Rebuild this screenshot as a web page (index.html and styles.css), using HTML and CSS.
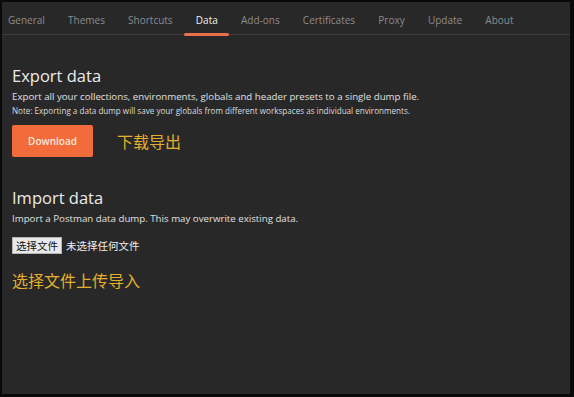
FILE: index.html
```html
<!DOCTYPE html>
<html>
<head>
<meta charset="utf-8">
<link rel="stylesheet" href="styles.css">
</head>
<body>
<div class="window">
  <nav class="tabs">
    <span class="tab first">General</span>
    <span class="tab">Themes</span>
    <span class="tab">Shortcuts</span>
    <span class="tab active">Data</span>
    <span class="tab">Add-ons</span>
    <span class="tab">Certificates</span>
    <span class="tab">Proxy</span>
    <span class="tab">Update</span>
    <span class="tab">About</span>
  </nav>
  <main class="content">
    <section class="section export">
      <h2 class="title">Export data</h2>
      <p class="desc">Export all your collections, environments, globals and header presets to a single dump file.</p>
      <p class="note">Note: Exporting a data dump will save your globals from different workspaces as individual environments.</p>
      <div class="action-row">
        <button class="btn-download">Download</button>
        <span class="annot">下载导出</span>
      </div>
    </section>
    <section class="section import">
      <h2 class="title">Import data</h2>
      <p class="desc">Import a Postman data dump. This may overwrite existing data.</p>
      <div class="file-row">
        <span class="file-btn">选择文件</span>
        <span class="file-label">未选择任何文件</span>
      </div>
      <div class="annot annot-import">选择文件上传导入</div>
    </section>
  </main>
</div>
</body>
</html>
```

FILE: styles.css
```css
html, body {
  margin: 0;
  padding: 0;
  height: 100%;
  background: #0a0a0a;
}
body {
  padding: 2px 4px 3px 2px;
  box-sizing: border-box;
  font-family: "Open Sans", "Noto Sans CJK SC", sans-serif;
}
.window {
  height: 100%;
  background: #282828;
  display: flex;
  flex-direction: column;
}
.tabs {
  display: flex;
  height: 32px;
  border-bottom: 1px solid #3c3c3c;
  padding-left: 6px;
  align-items: stretch;
}
.tab {
  padding: 3px 11.6px 0;
  font-size: 10px;
  color: #8c8c8c;
  display: flex;
  align-items: center;
  position: relative;
}
.tab.first {
  padding-left: 0;
}
.tab.active {
  color: #f0f0f0;
}
.tab.active::after {
  content: "";
  position: absolute;
  left: 0;
  right: 0;
  bottom: -2px;
  height: 3px;
  background: #e8704a;
  border-radius: 2px;
}
.content {
  padding: 0 10px;
  color: #e6e6e6;
}
.section.export {
  padding-top: 30px;
}
.section.import {
  padding-top: 30px;
}
.title {
  margin: 0;
  font-size: 16.5px;
  font-weight: 400;
  line-height: 22px;
  color: #ececec;
}
.desc {
  margin: 3px 0 0;
  font-size: 9.7px;
  line-height: 14px;
  color: #e0e0e0;
}
.note {
  margin: 1px 0 0;
  font-size: 8.1px;
  line-height: 12px;
  color: #dcdcdc;
}
.action-row {
  display: flex;
  align-items: center;
  margin-top: 8px;
}
.btn-download {
  width: 81px;
  height: 32px;
  border: none;
  border-radius: 2px;
  background: #f26b3a;
  color: #fde6dc;
  font-family: "Open Sans", sans-serif;
  font-size: 10px;
  font-weight: 600;
  padding: 0;
}
.annot {
  font-family: "Noto Sans CJK SC", sans-serif;
  font-size: 16px;
  color: #e2b02c;
  line-height: 20px;
}
.action-row .annot {
  margin-left: 24px;
}
.file-row {
  display: flex;
  align-items: center;
  margin-top: 11px;
  font-family: "Noto Sans CJK SC", sans-serif;
  font-size: 10.5px;
}
.file-btn {
  width: 48px;
  height: 15px;
  background: #e9e9e9;
  border: 1px solid #b4b4b4;
  color: #111;
  display: flex;
  align-items: center;
  justify-content: center;
  line-height: 15px;
}
.file-label {
  margin-left: 4px;
  color: #f0f0f0;
}
.annot-import {
  margin-top: 16px;
}
```
